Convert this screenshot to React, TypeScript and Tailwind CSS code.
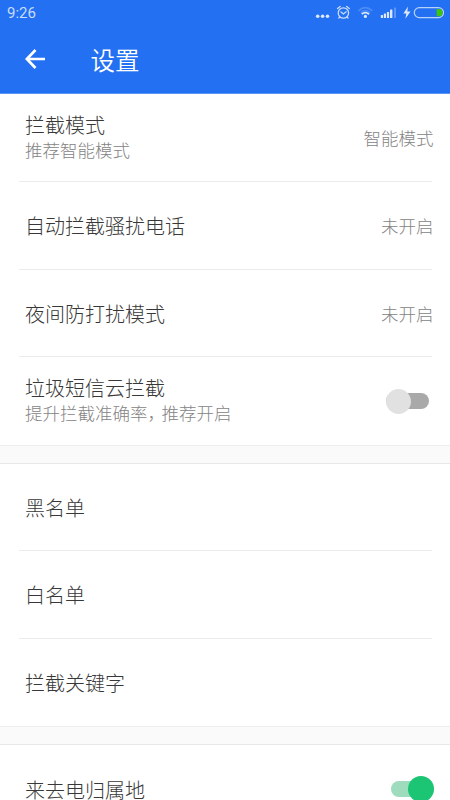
import type { ReactNode } from "react";

function StatusBar() {
  return (
    <div className="flex h-[26px] items-center justify-between pl-[7px] pr-[6px] text-[#c8dcfc]">
      <span className="font-['Roboto',sans-serif] text-[15px] font-normal leading-[26px]">9:26</span>
      <svg width="130" height="26" viewBox="314 0 130 26" fill="none">
        <g fill="#dce8fd">
          <circle cx="317.7" cy="16.3" r="1.8" />
          <circle cx="322.6" cy="16.3" r="1.8" />
          <circle cx="327.5" cy="16.3" r="1.8" />
        </g>
        <g stroke="#c8dcfc" strokeWidth="1.3" strokeLinecap="round">
          <circle cx="343.4" cy="13" r="5.2" />
          <path d="M337.5 8.6 L340.2 6.5 M349.3 8.6 L346.6 6.5 M339.8 17 L338.8 18 M347 17 L348 18 M341 12 L343.4 14 L346.2 11.8" />
        </g>
        <g strokeWidth="1.6">
          <path d="M358.4 10.8 Q365.3 4.4 372.4 10.8" stroke="#4c8bf5" />
          <path d="M360.8 12.8 Q365.3 8.6 370 12.8" stroke="#4c8bf5" />
          <path d="M361.8 14.2 Q365.3 11 369 14.2" stroke="#dce8fd" strokeWidth="1.8" />
        </g>
        <circle cx="365.4" cy="16.4" r="1.6" fill="#dce8fd" />
        <g fill="#dce8fd">
          <rect x="380.8" y="15" width="2.2" height="3" rx=".5" />
          <rect x="383.8" y="13.5" width="2.2" height="4.5" rx=".5" />
          <rect x="386.9" y="12" width="2.2" height="6" rx=".5" />
          <rect x="390" y="9.5" width="2.4" height="8.5" rx=".5" />
          <rect x="394" y="7.5" width="2" height="10.5" rx=".5" fill="#5c96f6" />
          <path d="M408 6.5 L403.4 13.4 L406.3 13.4 L405.4 18.8 L410.5 11.5 L407.3 11.5 Z" />
        </g>
        <rect x="414.3" y="7.6" width="29.2" height="10" rx="5" stroke="#b7d1fb" strokeWidth="1.2" />
        <path d="M436.7 9 H439 A3.6 3.6 0 0 1 439 16.2 H436.7 Z" fill="#3fc40c" />
      </svg>
    </div>
  );
}

function Toggle({ on = false }: { on?: boolean }) {
  return on ? (
    <div className="mr-[16px] flex h-[26px] w-[43px] items-center rounded-full">
      <div className="flex h-4 w-full items-center justify-end rounded-full bg-[#9fdbbd]">
        <div className="size-[26px] shrink-0 rounded-full bg-[#1bc573]" />
      </div>
    </div>
  ) : (
    <div className="mr-[21.5px] flex h-[26px] w-[43px] items-center rounded-full">
      <div className="flex h-4 w-full items-center rounded-full bg-[#a9a9a9]">
        <div className="size-[25px] shrink-0 rounded-full bg-[#e1e1e1]" />
      </div>
    </div>
  );
}

interface RowProps {
  title: string;
  note?: ReactNode;
  value?: string;
  control?: ReactNode;
  height?: string;
  divider?: boolean;
}

function Row({ title, note, value, control, height = "h-[88px]", divider = true }: RowProps) {
  return (
    <div className={`flex shrink-0 flex-col ${height}`}>
      <div className={`flex min-h-0 flex-1 items-center justify-between pl-[25px] ${note || control ? "" : "pt-px"}`}>
        <div className={`flex flex-col ${note ? "pb-0.5" : control ? "pt-px" : ""}`}>
          <span className="text-[20px] leading-[26px] text-[#383838]">{title}</span>
          {note && <span className="flex text-[17.5px] leading-[24px] text-[#848484]">{note}</span>}
        </div>
        {value && <span className="mr-[16.5px] text-[17.5px] leading-6 text-[#848484]">{value}</span>}
        {control}
      </div>
      {divider && <div className="ml-[19px] mr-[18px] h-px bg-[#ebebeb]" />}
    </div>
  );
}

function Gap() {
  return <div className="h-[19px] shrink-0 border-y border-t-[#eeeeee] border-b-[#e8e8e8] bg-[#fafafa]" />;
}

export default function App() {
  return (
    <div className="flex h-[800px] w-[450px] flex-col overflow-hidden bg-white font-['Noto_Sans_CJK_SC',sans-serif] font-light">
      <header className="h-[94px] shrink-0 border-b border-[#5b95f5] bg-[#2370f2]">
        <StatusBar />
        <div className="flex h-[66px] items-center pl-[25px] text-white">
          <svg width="21" height="20" viewBox="0 0 21 20" fill="none" stroke="currentColor" strokeWidth="2.7">
            <path d="M10.5 1 L1.8 10 L10.5 19 M2 10 H20" />
          </svg>
          <h1 className="ml-[44.5px] pt-0.5 text-[24.5px] leading-9 font-[350]">设置</h1>
        </div>
      </header>
      <Row title="拦截模式" note="推荐智能模式" value="智能模式" />
      <Row title="自动拦截骚扰电话" value="未开启" />
      <Row title="夜间防打扰模式" value="未开启" height="h-[87px]" />
      <Row
        title="垃圾短信云拦截"
        note={
          <>
            <span>提升拦截准确率</span>
            <span className="mr-[5.25px] [font-feature-settings:'halt']">，</span>
            <span>推荐开启</span>
          </>
        }
        control={<Toggle />}
        divider={false}
      />
      <Gap />
      <Row title="黑名单" height="h-[87px]" />
      <Row title="白名单" />
      <Row title="拦截关键字" height="h-[87px]" divider={false} />
      <Gap />
      <Row title="来去电归属地" control={<Toggle on />} divider={false} />
    </div>
  );
}
